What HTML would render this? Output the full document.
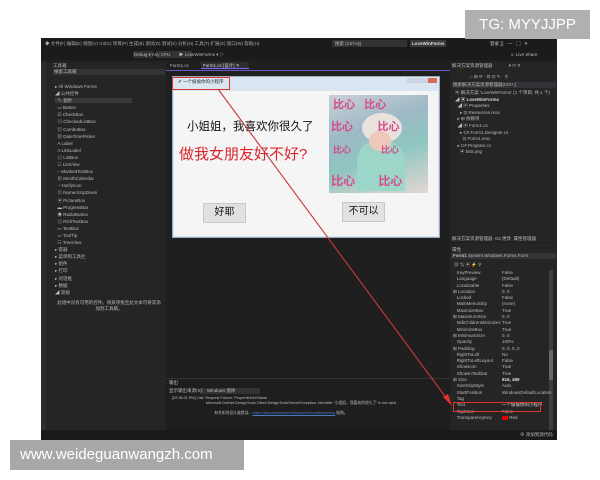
<!DOCTYPE html>
<html><head><meta charset="utf-8"><style>
*{margin:0;padding:0;box-sizing:border-box}
body{width:600px;height:480px;background:#fff;position:relative;overflow:hidden;font-family:"Liberation Sans","Noto Sans CJK SC",sans-serif}
.a{position:absolute}
.t{position:absolute;font-size:4.5px;color:#bbb;white-space:nowrap;line-height:6px}
</style></head><body>
<div class="a" style="left:41px;top:38px;width:516px;height:402px;background:#1f1f1f"></div>
<div class="a" style="left:41px;top:38px;width:516px;height:12px;background:#1b1b1c"></div>
<div class="t" style="left:45px;top:41px;color:#aaa">◆ 文件(F) 编辑(E) 视图(V) Git(G) 项目(P) 生成(B) 调试(D) 测试(S) 分析(N) 工具(T) 扩展(X) 窗口(W) 帮助(H)</div>
<div class="a" style="left:332px;top:40px;width:75px;height:7px;background:#333"></div>
<div class="t" style="left:335px;top:41px">搜索 (Ctrl+Q)</div>
<div class="a" style="left:410px;top:40px;width:36px;height:7px;background:#3a3a3a"></div>
<div class="t" style="left:412px;top:41px;color:#ddd;font-weight:bold">LoveWinForms</div>
<div class="t" style="left:490px;top:41px;color:#ccc">登录 ⅀ &nbsp; — &nbsp; ▢ &nbsp; ✕</div>
<div class="a" style="left:41px;top:50px;width:516px;height:10px;background:#1b1b1c"></div>
<div class="a" style="left:133px;top:51px;width:20px;height:7px;background:#333"></div>
<div class="a" style="left:156px;top:51px;width:36px;height:7px;background:#333"></div>
<div class="t" style="left:134px;top:52px">Debug ▾ Any CPU &nbsp; &nbsp; &nbsp; ▶ LoveWinForms ▾ ▷</div>
<div class="t" style="left:510px;top:52px">☺ Live Share</div>
<div class="a" style="left:41px;top:62px;width:5px;height:370px;background:#2d2d30"></div>
<div class="a" style="left:46px;top:62px;width:120px;height:370px;background:#252526"></div>
<div class="t" style="left:53px;top:63px">工具箱</div>
<div class="a" style="left:53px;top:69px;width:112px;height:6px;background:#333337"></div>
<div class="t" style="left:54px;top:69px">搜索工具箱</div>
<div class="t" style="left:55px;top:83px;line-height:7.1px">▸ All Windows Forms<br>◢ 公共控件<br><span style="background:#3a3a3a;padding-right:60px">&nbsp;&nbsp;↖ 指针</span><br>&nbsp;&nbsp;▭ Button<br>&nbsp;&nbsp;☑ CheckBox<br>&nbsp;&nbsp;▤ CheckedListBox<br>&nbsp;&nbsp;▥ ComboBox<br>&nbsp;&nbsp;▦ DateTimePicker<br>&nbsp;&nbsp;A Label<br>&nbsp;&nbsp;A LinkLabel<br>&nbsp;&nbsp;▤ ListBox<br>&nbsp;&nbsp;☷ ListView<br>&nbsp;&nbsp;⌐ MaskedTextBox<br>&nbsp;&nbsp;▦ MonthCalendar<br>&nbsp;&nbsp;◔ NotifyIcon<br>&nbsp;&nbsp;▥ NumericUpDown<br>&nbsp;&nbsp;▣ PictureBox<br>&nbsp;&nbsp;▬ ProgressBar<br>&nbsp;&nbsp;◉ RadioButton<br>&nbsp;&nbsp;▤ RichTextBox<br>&nbsp;&nbsp;▭ TextBox<br>&nbsp;&nbsp;▭ ToolTip<br>&nbsp;&nbsp;☷ TreeView<br>▸ 容器<br>▸ 菜单和工具栏<br>▸ 组件<br>▸ 打印<br>▸ 对话框<br>▸ 数据<br>◢ 常规</div>
<div class="t" style="left:57px;top:300px;line-height:6px;text-align:center;width:104px;white-space:normal">此组中没有可用的控件。将某项拖至此文本可将其添加到工具箱。</div>
<div class="t" style="left:170px;top:63px">Form1.cs</div>
<div class="a" style="left:201px;top:62px;width:48px;height:7px;background:#2d2d30;border-bottom:1px solid #7a6aff"></div>
<div class="t" style="left:203px;top:63px;color:#ddd">Form1.cs [设计] ✕</div>
<div class="a" style="left:166px;top:70px;width:284px;height:1px;background:#6a5acd"></div>
<div class="a" style="left:172px;top:76px;width:268px;height:162px;background:#d9e6f2;border:1px solid #9ab"></div>
<div class="t" style="left:178px;top:79px;color:#222">✐ 一个偷偷你的小程序</div>
<div class="a" style="left:407px;top:78px;width:30px;height:5px;background:#c8d4e4"></div>
<div class="a" style="left:428px;top:78px;width:9px;height:5px;background:#d86a5a"></div>
<div class="a" style="left:174px;top:91px;width:264px;height:145px;background:#f5f5f5"></div>
<div class="a" style="left:187px;top:118px;font-size:11.5px;color:#111;white-space:nowrap">小姐姐，我喜欢你很久了</div>
<div class="a" style="left:179px;top:143px;font-size:15px;color:#d8262a;white-space:nowrap">做我女朋友好不好?</div>
<div class="a" style="left:329px;top:95px;width:99px;height:98px;background:linear-gradient(160deg,#c9d0d6 0%,#9db9c6 35%,#8fc6c0 60%,#e3d6d2 100%)">
<div class="a" style="left:33px;top:18px;width:40px;height:30px;border-radius:50%;background:#e8e2dc"></div>
<div class="a" style="left:28px;top:46px;width:48px;height:50px;border-radius:40% 40% 0 0;background:#9bd6c8"></div>
<div class="a" style="left:40px;top:36px;width:22px;height:20px;border-radius:50%;background:#efc8bc"></div>
<div class="t" style="left:4px;top:4px;font-size:11px;line-height:12px;color:#d84a8a;font-weight:bold">比心 &nbsp;&nbsp;比心</div>
<div class="t" style="left:2px;top:26px;font-size:11px;line-height:12px;color:#d84a8a;font-weight:bold">比心 &nbsp;&nbsp;&nbsp;&nbsp;&nbsp;&nbsp; 比心</div>
<div class="t" style="left:4px;top:52px;font-size:9px;color:#d84a8a;font-weight:bold">比心 &nbsp;&nbsp;&nbsp;&nbsp;&nbsp;&nbsp;&nbsp;&nbsp;&nbsp;&nbsp; 比心</div>
<div class="t" style="left:2px;top:80px;font-size:12px;line-height:13px;color:#d84a8a;font-weight:bold">比心 &nbsp;&nbsp;&nbsp;&nbsp;&nbsp; 比心</div>
</div>
<div class="a" style="left:203px;top:203px;width:43px;height:20px;background:#e1e1e1;border:1px solid #c8c8c8;font-size:10px;text-align:center;line-height:18px;color:#111">好耶</div>
<div class="a" style="left:342px;top:202px;width:43px;height:20px;background:#e1e1e1;border:1px solid #c8c8c8;font-size:10px;text-align:center;line-height:18px;color:#111">不可以</div>
<div class="a" style="left:166px;top:378px;width:284px;height:52px;background:#1e1e1e;border-top:1px solid #333"></div>
<div class="t" style="left:169px;top:380px">输出</div>
<div class="a" style="left:200px;top:388px;width:60px;height:6px;background:#333337"></div>
<div class="t" style="left:169px;top:388px">显示输出来源(S): &nbsp; Windows 窗体</div>
<div class="t" style="left:172px;top:396px;font-size:3.8px;line-height:5px">[22:36:31 PM] Call: Request Failure: PropertiesGetValue<br>&nbsp; &nbsp; &nbsp; &nbsp; &nbsp; &nbsp; &nbsp; &nbsp; &nbsp; &nbsp; &nbsp; &nbsp; &nbsp; &nbsp; &nbsp; &nbsp; Microsoft.DotNet.DesignTools.Client.DesignToolsServerException: Identifier '小姐姐，我喜欢你很久了' is not valid<br><br>&nbsp; &nbsp; &nbsp; &nbsp; &nbsp; &nbsp; &nbsp; &nbsp; &nbsp; &nbsp; &nbsp; &nbsp; &nbsp; &nbsp; &nbsp; &nbsp; &nbsp; &nbsp; &nbsp; &nbsp; 有关如何设计器错误... <span style="color:#4a78c8;text-decoration:underline">https://aka.ms/winforms/designer/troubleshooting</span> 指南。</div>
<div class="a" style="left:450px;top:62px;width:107px;height:180px;background:#252526"></div>
<div class="t" style="left:452px;top:63px">解决方案资源管理器 &nbsp; &nbsp; &nbsp; &nbsp; &nbsp; &nbsp; ▾ ⊓ ✕</div>
<div class="t" style="left:470px;top:74px">⌂ ⊞ ⟳ · ⊟ ⊡ ✎ · ⚲</div>
<div class="a" style="left:452px;top:82px;width:104px;height:6px;background:#333337"></div>
<div class="t" style="left:453px;top:82px">搜索解决方案资源管理器(Ctrl+;)</div>
<div class="t" style="left:455px;top:90px;line-height:6.6px">▣ 解决方案 'LoveWinForms' (1 个项目, 共 1 个)<br>◢ <b style="color:#ddd">▣ LoveWinForms</b><br>&nbsp;&nbsp;◢ ▣ Properties<br>&nbsp;&nbsp;&nbsp;&nbsp;▸ ⊡ Resources.resx<br>&nbsp;&nbsp;▸ ⊞ 依赖项<br>&nbsp;&nbsp;◢ ▣ Form1.cs<br>&nbsp;&nbsp;&nbsp;&nbsp;▸ C# Form1.Designer.cs<br>&nbsp;&nbsp;&nbsp;&nbsp;&nbsp;&nbsp;⊡ Form1.resx<br>&nbsp;&nbsp;▸ C# Program.cs<br>&nbsp;&nbsp;&nbsp;&nbsp;▣ 550.png</div>
<div class="t" style="left:452px;top:236px">解决方案资源管理器 &nbsp;Git 更改 &nbsp;属性管理器</div>
<div class="a" style="left:450px;top:243px;width:107px;height:187px;background:#252526"></div>
<div class="t" style="left:452px;top:247px">属性</div>
<div class="a" style="left:451px;top:253px;width:105px;height:6px;background:#333337"></div>
<div class="t" style="left:453px;top:253px"><b>Form1</b> System.Windows.Forms.Form</div>
<div class="t" style="left:454px;top:262px">▦ ⇅ ▣ ⚡ ⚲</div>
<div class="a" style="left:549px;top:270px;width:4px;height:160px;background:#3e3e42"></div>
<div class="a" style="left:549px;top:350px;width:4px;height:30px;background:#686868"></div>
<div class="t" style="left:453px;top:270px;line-height:6.3px">&nbsp;&nbsp;&nbsp;KeyPreview<br>&nbsp;&nbsp;&nbsp;Language<br>&nbsp;&nbsp;&nbsp;Localizable<br>⊞ Location<br>&nbsp;&nbsp;&nbsp;Locked<br>&nbsp;&nbsp;&nbsp;MainMenuStrip<br>&nbsp;&nbsp;&nbsp;MaximizeBox<br>⊞ MaximumSize<br>&nbsp;&nbsp;&nbsp;MdiChildrenMinimizec<br>&nbsp;&nbsp;&nbsp;MinimizeBox<br>⊞ MinimumSize<br>&nbsp;&nbsp;&nbsp;Opacity<br>⊞ Padding<br>&nbsp;&nbsp;&nbsp;RightToLeft<br>&nbsp;&nbsp;&nbsp;RightToLeftLayout<br>&nbsp;&nbsp;&nbsp;ShowIcon<br>&nbsp;&nbsp;&nbsp;ShowInTaskbar<br>⊞ Size<br>&nbsp;&nbsp;&nbsp;SizeGripStyle<br>&nbsp;&nbsp;&nbsp;StartPosition<br>&nbsp;&nbsp;&nbsp;Tag<br>&nbsp;&nbsp;&nbsp;Text<br>&nbsp;&nbsp;&nbsp;TopMost<br>&nbsp;&nbsp;&nbsp;TransparencyKey</div>
<div class="t" style="left:502px;top:270px;line-height:6.3px">False<br>(Default)<br>False<br>0, 0<br>False<br>(none)<br>True<br>0, 0<br>True<br>True<br>0, 0<br>100%<br>0, 0, 0, 0<br>No<br>False<br>True<br>True<br><b style="color:#ddd">816, 489</b><br>Auto<br>WindowsDefaultLocation<br>&nbsp;<br><span style="color:#ddd">一个偷偷你的小程序</span><br>False<br><span style="display:inline-block;width:6px;height:4px;background:#d00;vertical-align:middle"></span> Red</div>
<div class="a" style="left:41px;top:430px;width:516px;height:10px;background:#1a1a1a"></div>
<div class="t" style="left:520px;top:432px">⊕ 添加到源代码</div>
<div class="a" style="left:172px;top:77px;width:58px;height:13px;border:1px solid #d33"></div>
<div class="a" style="left:453px;top:402px;width:88px;height:10px;border:1px solid #d33"></div>
<svg class="a" style="left:0;top:0" width="600" height="480"><line x1="218" y1="89" x2="450" y2="403" stroke="#c8383a" stroke-width="1.1"/><polygon points="452,406 443,397 448,394" fill="#d33"/></svg>
<div class="a" style="left:465px;top:10px;width:125px;height:29px;background:#b0b0b0;color:#fff;font-size:15px;line-height:29px;text-align:center">TG: MYYJJPP</div>
<div class="a" style="left:10px;top:440px;width:234px;height:30px;background:#a8a8a8;color:#fff;font-size:15px;line-height:30px;padding-left:10px">www.weideguanwangzh.com</div>
</body></html>
